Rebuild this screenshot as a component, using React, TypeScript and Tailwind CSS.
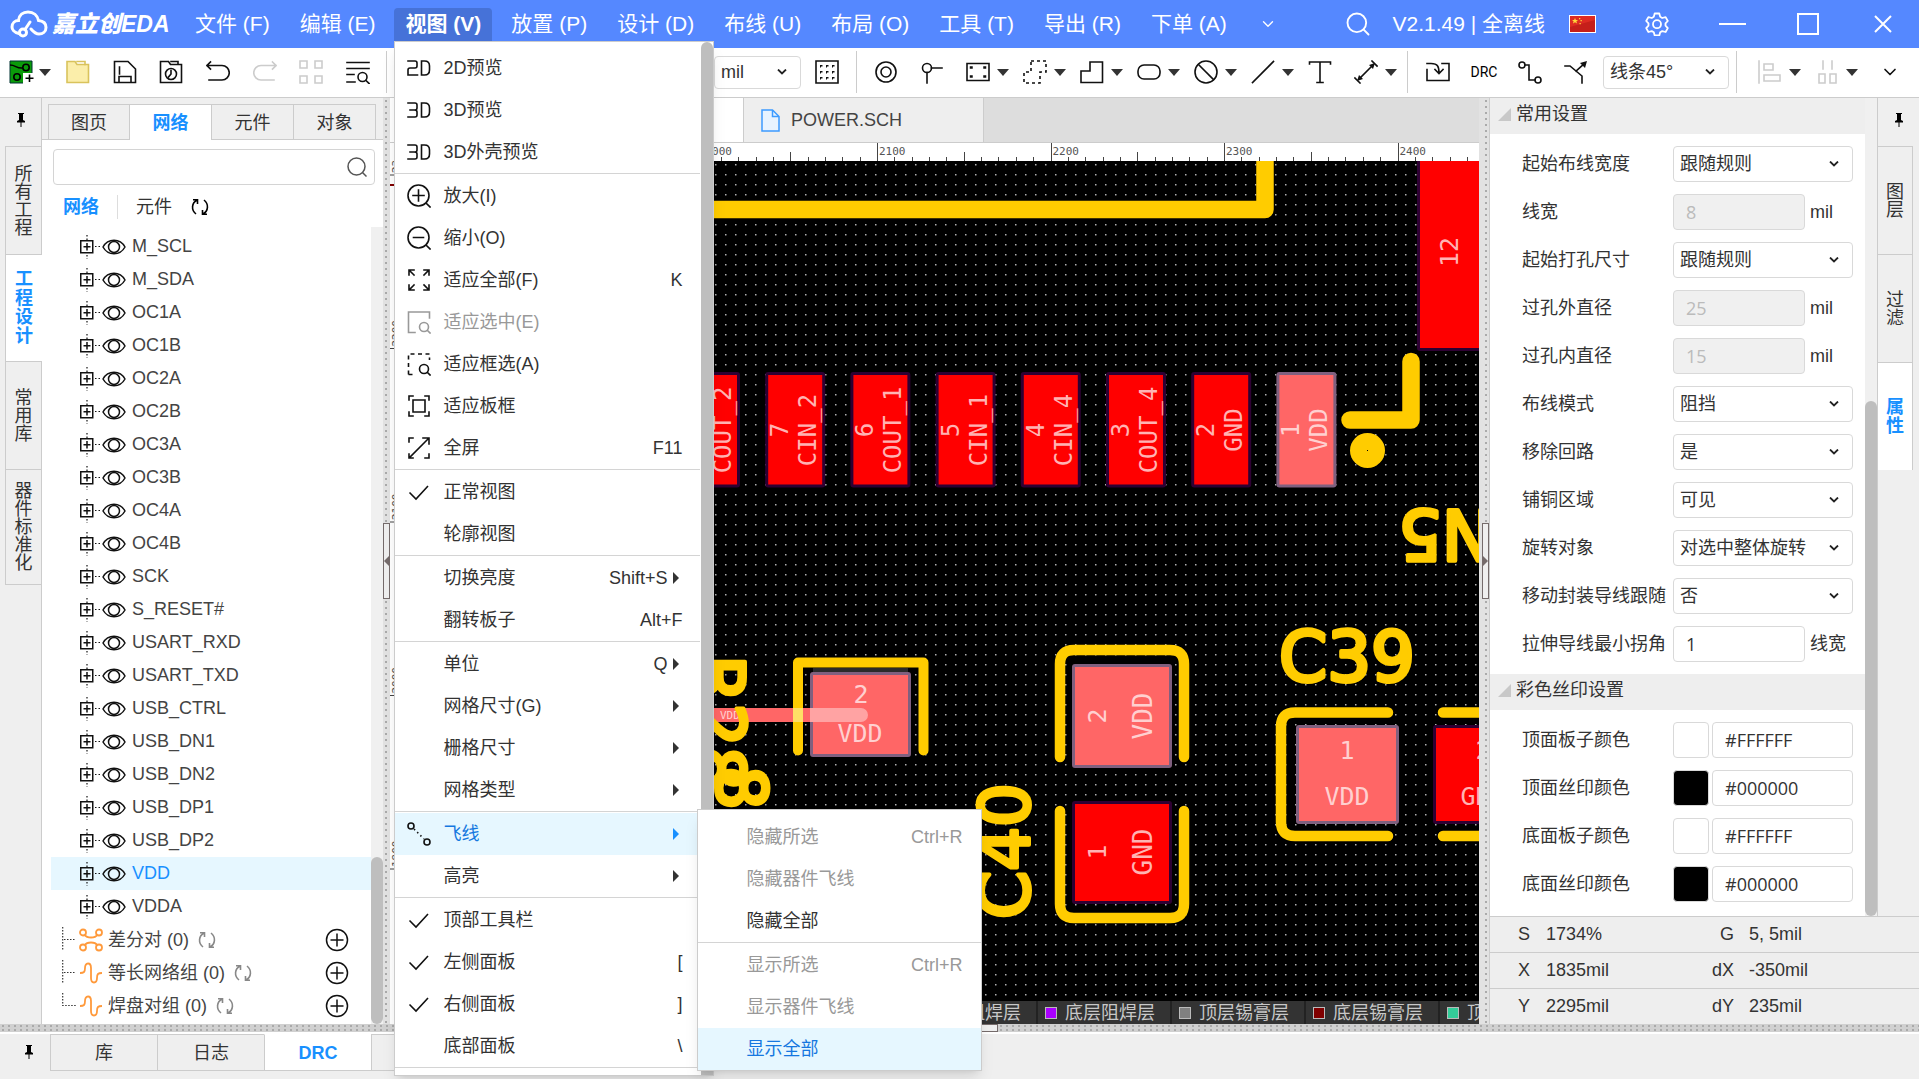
import React from "react";
import { Search, ChevronDown } from "lucide-react";

type Kids = { children?: React.ReactNode };

/* ---------- shared bits ---------- */

function Ico({ children, className = "", stroke = "#111" }: Kids & { className?: string; stroke?: string }) {
  return (
    <svg
      viewBox="0 0 24 24"
      className={"h-6 w-6 shrink-0 " + className}
      fill="none"
      stroke={stroke}
      strokeWidth={1.6}
      strokeLinecap="square"
      aria-hidden="true"
    >
      {children}
    </svg>
  );
}

function Caret() {
  return (
    <svg viewBox="0 0 12 8" className="h-2 w-3 shrink-0" fill="#333" aria-hidden="true">
      <path d="M0 1h12L6 8z" />
    </svg>
  );
}

function Pin() {
  return (
    <svg viewBox="0 0 10 14" className="h-3.5 w-2.5" fill="#000" aria-hidden="true">
      <path d="M2 0h6v1H7v6l2 1v1.500H1V8l2-1V1H2z" />
      <path d="M4.500 9h1v5h-1z" />
    </svg>
  );
}

function Refresh({ className }: { className: string }) {
  return (
    <svg viewBox="0 0 20 20" className={"h-5 w-5 " + className} fill="none" stroke="currentColor" strokeWidth={1.600} aria-hidden="true">
      <path d="M7 3C1.500 6 1 13 6 17M13 17C18.500 14 19 7 14 3M3 2.800h4.500V7M17 17.200h-4.500V13" />
    </svg>
  );
}

/* ---------- header ---------- */

type MenuRow =
  | "-"
  | { t: string; k?: string; icon?: React.ReactNode; sub?: boolean; off?: boolean; on?: boolean };

const check = (
  <Ico>
    <path d="M2.500 12.500 9 19 21 6" strokeLinecap="butt" />
  </Ico>
);
const two = (
  <Ico>
    <path d="M1 5h7q2 0 2 2v3q0 2-2 2H3q-2 0-2 2v5h9.500M14.500 5h3q5 0 5 5v4q0 5-5 5h-3z" />
  </Ico>
);
const three = (
  <Ico>
    <path d="M1 5h7q2 0 2 2v3q0 2-2 2H3M8 12q2 0 2 2v3q0 2-2 2H1M14.500 5h3q5 0 5 5v4q0 5-5 5h-3z" />
  </Ico>
);

const viewRows: MenuRow[] = [
  { t: "2D预览", icon: two },
  { t: "3D预览", icon: three },
  { t: "3D外壳预览", icon: three },
  "-",
  { t: "放大(I)", icon: <Ico><circle cx="11.500" cy="11.500" r="10.500" /><path d="M11.500 6v11M6 11.500h11M19.500 19.500l3.500 3.500" /></Ico> },
  { t: "缩小(O)", icon: <Ico><circle cx="11.500" cy="11.500" r="10.500" /><path d="M6.500 11.500h10M19.500 19.500l3.500 3.500" /></Ico> },
  { t: "适应全部(F)", k: "K", icon: <Ico><path d="M2 7V2h5M2.500 2.500 7 7M17 2h5v5M21.500 2.500 17 7M2 17v5h5M2.500 21.500 7 17M22 17v5h-5M21.500 21.500 17 17" /></Ico> },
  { t: "适应选中(E)", off: true, icon: <Ico stroke="#999"><path d="M8 22.500H1.500V2h21v6" /><circle cx="17" cy="17" r="4.500" /><path d="m20.500 20.500 2.500 2.500" /></Ico> },
  { t: "适应框选(A)", icon: <Ico><path d="M1.500 22.500V2h21v6M1.500 22.500H9" strokeDasharray="4 3.500" strokeLinecap="butt" /><circle cx="17" cy="17" r="4.500" /><path d="m20.500 20.500 2.500 2.500" /></Ico> },
  { t: "适应板框", icon: <Ico><path d="M2 6V2h4M18 2h4v4M2 18v4h4M22 18v4h-4M6 6h12v12H6z" /></Ico> },
  { t: "全屏", k: "F11", icon: <Ico><path d="M2 6V2h4M2 18v4h4M22 18v4h-4M2.500 21.500l19-19M16 2h6v6" /></Ico> },
  "-",
  { t: "正常视图", icon: check },
  { t: "轮廓视图" },
  "-",
  { t: "切换亮度", k: "Shift+S", sub: true },
  { t: "翻转板子", k: "Alt+F" },
  "-",
  { t: "单位", k: "Q", sub: true },
  { t: "网格尺寸(G)", sub: true },
  { t: "栅格尺寸", sub: true },
  { t: "网格类型", sub: true },
  "-",
  { t: "飞线", sub: true, on: true, icon: <Ico><circle cx="4" cy="4" r="3" /><circle cx="20" cy="20" r="3" /><path d="m7 7 10 10" strokeDasharray="1.500 3" strokeLinecap="butt" /></Ico> },
  { t: "高亮", sub: true },
  "-",
  { t: "顶部工具栏", icon: check },
  { t: "左侧面板", k: "[", icon: check },
  { t: "右侧面板", k: "]", icon: check },
  { t: "底部面板", k: "\\" },
  "-",
];

const flyRows: MenuRow[] = [
  { t: "隐藏所选", k: "Ctrl+R", off: true },
  { t: "隐藏器件飞线", off: true },
  { t: "隐藏全部" },
  "-",
  { t: "显示所选", k: "Ctrl+R", off: true },
  { t: "显示器件飞线", off: true },
  { t: "显示全部", on: true },
];

function ViewMenu() {
  return (
    <div className="absolute left-0 top-full z-20 flex w-80 border border-[#ccc] bg-white text-lg font-normal leading-6 text-[#333] shadow-lg">
      <ul className="min-w-0 flex-1 pb-1.5 pt-[5px]">
        {viewRows.map((r, i) =>
          r === "-" ? (
            <li key={i} className="mb-px mr-px h-px bg-[#d4d4d4]" />
          ) : (
            <li key={i} className="relative">
              <button
                disabled={r.off}
                className={
                  "flex h-[42px] w-full items-center pl-3 pr-[19px] text-left " +
                  (r.on ? "bg-[#e6f7ff] text-[#1677e0]" : r.off ? "text-[#999]" : "")
                }
              >
                <span className="w-9">{r.icon}</span>
                <span className="flex-1">{r.t}</span>
                <span className={r.sub ? "mr-1.5" : ""}>{r.k}</span>
                {r.sub && (
                  <svg viewBox="0 0 6 12" className="mr-[3px] h-3 w-1.5" fill={r.on ? "#1890ff" : "#333"} aria-hidden="true">
                    <path d="M0 0v12l6-6z" />
                  </svg>
                )}
              </button>
              {r.on && <FlyMenu />}
            </li>
          )
        )}
      </ul>
      <div className="w-3 rounded-t-full bg-[#bebebe]" />
    </div>
  );
}

function FlyMenu() {
  return (
    <ul className="absolute -top-1 left-[302px] z-30 w-[285px] border border-[#ccc] bg-white pt-1.5 shadow-lg">
      {flyRows.map((r, i) =>
        r === "-" ? (
          <li key={i} className="mb-px h-px bg-[#d4d4d4]" />
        ) : (
          <li key={i}>
            <button
              disabled={r.off}
              className={
                "flex h-[42px] w-full items-center justify-between pl-12 pr-[19px] text-left " +
                (r.on ? "bg-[#e6f7ff] text-[#1677e0]" : r.off ? "text-[#999]" : "text-[#333]")
              }
            >
              <span>{r.t}</span>
              <span>{r.k}</span>
            </button>
          </li>
        )
      )}
    </ul>
  );
}

const menus = ["文件 (F)", "编辑 (E)", "视图 (V)", "放置 (P)", "设计 (D)", "布线 (U)", "布局 (O)", "工具 (T)", "导出 (R)", "下单 (A)"];

function Header() {
  return (
    <header className="flex h-12 shrink-0 items-center bg-[#5588ff] text-[21px] leading-8 text-white">
      <div className="flex w-[184px] shrink-0 items-center pl-[10px]">
        <svg viewBox="0 0 38 28" className="h-7 w-[38px]" fill="none" stroke="#fff" strokeWidth={3} strokeLinecap="round" aria-hidden="true">
          <path d="M9 23.500C3.500 22.500 2 19 2 17c0-4 3-6.500 6.500-6.500C9 5 13 2 18 2c5.500 0 9.500 3.500 10.500 8.500C33 11 36 13.500 36 17.500c0 4.500-3.500 6.500-7 6.500-3 0-5-1.500-8-5" />
          <path d="m20 12-5 7.500" />
          <circle cx="13" cy="22.500" r="3.500" />
        </svg>
        <span className="ml-1 whitespace-nowrap text-[23px] font-black italic">嘉立创EDA</span>
      </div>
      <nav className="flex gap-2">
        {menus.map((m, i) => (
          <div key={m} className="relative">
            <button className={"h-[33px] whitespace-nowrap rounded-t px-[11px] " + (i === 2 ? "bg-[#4672d8] font-bold" : "")}>
              {m}
            </button>
            {i === 2 && <ViewMenu />}
          </div>
        ))}
      </nav>
      <button aria-label="更多菜单" className="ml-[21px]">
        <ChevronDown size={18} strokeWidth={1.800} />
      </button>
      <div className="ml-auto flex items-center">
        <button aria-label="搜索">
          <Search size={28} strokeWidth={1.600} />
        </button>
        <span className="ml-5 whitespace-nowrap">V2.1.49 | 全离线</span>
        <svg viewBox="0 0 27 18" className="ml-6 h-[18px] w-[27px]" aria-label="中国">
          <path d="M0 0h27v18H0z" fill="#fff" />
          <path d="M1 1h25v16H1z" fill="#dd2b22" />
          <path d="M1 12 26 5v12H1z" fill="#c51f1a" />
          <path d="m6 3 .9 2h2.200L7.400 6.300 8 8.500 6 7.200 4 8.500l.6-2.200L3 5h2.100zM10 3h1.300v1.300H10zM11.500 5h1.300v1.300h-1.300zM10.500 8h1.300v1.300h-1.300z" fill="#ffd83a" />
        </svg>
        <button aria-label="设置" className="ml-[49px]">
          <svg viewBox="0 0 24 24" className="h-6 w-6" fill="none" stroke="#fff" strokeWidth={1.800} strokeLinejoin="round" aria-hidden="true">
            <path d="M9.700 1.500h4.600l.9 3.300 2 1.200 3.400-.9 2.200 3.900-2.300 2.400v2.200l2.300 2.500-2.200 3.900-3.400-.9-2 1.100-.9 3.300H9.700l-.9-3.300-2-1.100-3.400.9-2.200-3.900 2.300-2.500v-2.200L1.200 9l2.200-3.900 3.400.9 2-1.200z" />
            <circle cx="12" cy="12.200" r="4" />
          </svg>
        </button>
        <button aria-label="最小化" className="ml-[50px] h-6 w-7">
          <svg viewBox="0 0 28 24" className="h-6 w-7" stroke="#fff" strokeWidth={2} aria-hidden="true">
            <path d="M0 12h27" />
          </svg>
        </button>
        <button aria-label="最大化" className="ml-[50px]">
          <svg viewBox="0 0 22 22" className="h-[22px] w-[22px]" fill="none" stroke="#fff" strokeWidth={2} aria-hidden="true">
            <path d="M1 1h20v20H1z" />
          </svg>
        </button>
        <button aria-label="关闭" className="ml-[55px] mr-[27px]">
          <svg viewBox="0 0 18 18" className="h-[18px] w-[18px]" stroke="#fff" strokeWidth={2} aria-hidden="true">
            <path d="m1 1 16 16M17 1 1 17" />
          </svg>
        </button>
      </div>
    </header>
  );
}

/* ---------- toolbar ---------- */

function Tool({ label, caret, children }: Kids & { label: string; caret?: boolean }) {
  return (
    <button
      aria-label={label}
      className={"flex h-9 shrink-0 items-center " + (caret ? "w-[57px] gap-[7px] pl-[11px]" : "w-[46px] justify-center")}
    >
      {children}
      {caret && <Caret />}
    </button>
  );
}

function Sep() {
  return <span className="mx-[7px] h-[42px] w-px shrink-0 bg-[#ccc]" />;
}

function Pick({ label, value, className }: { label: string; value: string; className: string }) {
  return (
    <span className={"relative shrink-0 " + className}>
      <select
        aria-label={label}
        defaultValue={value}
        className="h-full w-full appearance-none rounded-sm border border-[#d9d9d9] bg-white pl-1.5 text-lg leading-6 text-[#333]"
      >
        <option>{value}</option>
      </select>
      <svg viewBox="0 0 10 6" className="pointer-events-none absolute right-3.5 top-1/2 h-1.5 w-2.5 -translate-y-1/2" fill="none" stroke="#222" strokeWidth={1.800} aria-hidden="true">
        <path d="m1 .5 4 4 4-4" />
      </svg>
    </span>
  );
}

const gridDots = [6, 12, 18].flatMap((y) => [6, 12, 18].map((x) => [x, y]));

function Toolbar() {
  return (
    <div className="flex h-[50px] shrink-0 items-center border-b border-[#ccc] bg-white pb-px">
      <button aria-label="新建" className="flex h-9 w-[55px] shrink-0 items-center gap-1 pl-[9px]">
        <svg viewBox="0 0 26 24" className="h-6 w-[26px]" aria-hidden="true">
          <path d="M1 1h22v22H1z" fill="#0a9b0a" stroke="#033" />
          <circle cx="17" cy="7.500" r="3.200" fill="none" stroke="#000" strokeWidth="1.600" />
          <circle cx="8" cy="17" r="3.200" fill="none" stroke="#000" strokeWidth="1.600" />
          <path d="M1 5c6 0 6 3.500 12.500 3" fill="none" stroke="#000" strokeWidth="1.400" />
          <path d="M14 13h12v11H14z" fill="#fff" />
          <path d="M20.500 14.500v7.500M16.500 18.300h8" stroke="#000" strokeWidth="1.600" />
        </svg>
        <Caret />
      </button>
      <div className="grid w-[326px] shrink-0 grid-cols-7 justify-items-center">
        <Tool label="打开">
          <Ico stroke="#d9c35c"><path d="M1 1.500h8l2 3h11.500v18H1z" fill="#fbeeaa" /><path d="M11 1.500h8v3" /></Ico>
        </Tool>
        <Tool label="保存">
          <Ico><path d="M1.500 1.500H15L22.500 9v13.500h-21zM6.500 7v7M6 22v-5.500h12V22" /></Ico>
        </Tool>
        <Tool label="历史">
          <Ico><path d="M1.500 1.500h8l2 3h11v18h-21zM12 1.500h7v3" /><circle cx="12" cy="14" r="5.500" /><path d="M12 10.500V14l-2.500 3" /></Ico>
        </Tool>
        <Tool label="撤销">
          <Ico><path d="M1 5.500h15a7 7 0 0 1 0 14.500H3M4.500 2 1 5.500 4.500 9" /></Ico>
        </Tool>
        <Tool label="重做">
          <Ico stroke="#ccc"><path d="M23 5.500H8A7 7 0 0 0 8 20h13M19.500 2 23 5.500 19.500 9" /></Ico>
        </Tool>
        <Tool label="布局">
          <Ico stroke="#ccc"><path d="M1 1h7v7H1zM16 1h7v7h-7zM1 16h7v7H1zM16 16h7v7h-7z" /></Ico>
        </Tool>
        <Tool label="查找">
          <Ico><path d="M1 2.500h22M1 8.500h22M1 14.500h7M1 22h8" /><circle cx="16.500" cy="17" r="4.500" /><path d="m20 20.500 3 3" /></Ico>
        </Tool>
      </div>
      <span className="ml-[5px] h-[42px] w-px shrink-0 bg-[#ccc]" />
      <div className="w-[327px] shrink-0" />
      <Pick label="单位" value="mil" className="mr-[3px] h-[33px] w-[87px]" />
      <Tool label="网格">
        <Ico>
          <path d="M1 1h22v22H1z" />
          {gridDots.map(([x, y]) => (
            <path key={x + "," + y} d={`M${x - 1} ${y - 1}h2.500v1.500h-1.500v1h-1z`} fill="#111" stroke="none" />
          ))}
        </Ico>
      </Tool>
      <span className="mx-1.5 h-[42px] w-px shrink-0 bg-[#ccc]" />
      <Tool label="过孔"><Ico><circle cx="12" cy="12" r="10" /><circle cx="12" cy="12" r="5" /></Ico></Tool>
      <Tool label="焊盘"><Ico><circle cx="7" cy="8" r="4.500" /><path d="M11.500 8H22M7 12.500V23" /></Ico></Tool>
      <Tool label="板框" caret>
        <Ico><path d="M1 3.500h22v17H1z" /><path d="M5 7.500h.5M18.500 7.500h.5M5 16.500h.5M18.500 16.500h.5" strokeWidth={2.500} /></Ico>
      </Tool>
      <Tool label="区域" caret><Ico><path d="M8 1h15v11h-6v11H1V12h7z" strokeDasharray="3 3" strokeLinecap="butt" /></Ico></Tool>
      <Tool label="填充" caret><Ico><path d="M10 2h12.500v20.500H1V11h9z" /></Ico></Tool>
      <Tool label="挖槽" caret><Ico><rect x="1" y="5" width="22" height="14" rx="6" /></Ico></Tool>
      <Tool label="禁止区域" caret><Ico><circle cx="12" cy="12" r="11" /><path d="m4.500 4.500 15 15" /></Ico></Tool>
      <Tool label="线条" caret><Ico><path d="m1.500 22.500 21-21" /></Ico></Tool>
      <Tool label="文本"><Ico><path d="M1.500 4V2h21v2M12 2v20.500M9 22.500h6" /></Ico></Tool>
      <Tool label="尺寸" caret>
        <Ico><path d="M5 19 19 5M1 18l5 5M18 1l5 5" /><path d="m3 21 2-6 4 4zM21 3l-2 6-4-4z" fill="#111" stroke="none" /></Ico>
      </Tool>
      <Sep />
      <Tool label="导入"><Ico><path d="M1 3.500h4C12 3.500 13 7 13 13M9 9.500l4 4 4-4M16 3.500h7v17H1v-11" /></Ico></Tool>
      <button className="h-9 w-[46px] shrink-0 font-['Roboto',sans-serif] text-sm leading-6 text-black">DRC</button>
      <Tool label="布线"><Ico><circle cx="4" cy="5" r="3" /><circle cx="20" cy="20" r="3" /><path d="M7 5h4v15h6" /></Ico></Tool>
      <Tool label="扇出"><Ico><path d="M1 6h5l12 10v7M12 11l8-7" /><path d="m23 1-7 2 5 5z" fill="#111" stroke="none" /></Ico></Tool>
      <Pick label="线条角度" value="线条45°" className="ml-1 h-[33px] w-[126px]" />
      <Sep />
      <div className="w-[3px] shrink-0" />
      <Tool label="对齐" caret><Ico stroke="#ccc"><path d="M1 1v22M6 4h9v6H6zM6 15h16v6H6z" /></Ico></Tool>
      <Tool label="分布" caret><Ico stroke="#ccc"><path d="M8 1v8M17 1v8M4 14h6v9H4zM15 14h6v9h-6z" /></Ico></Tool>
      <button aria-label="更多工具" className="ml-auto mr-[19px]">
        <ChevronDown size={20} strokeWidth={2} color="#111" />
      </button>
    </div>
  );
}

/* ---------- left side ---------- */

function RailTab({ text, active, className }: { text: string; active?: boolean; className: string }) {
  return (
    <button
      className={
        "flex w-full items-center justify-center border-t border-[#ccc] text-lg " +
        (active ? "bg-white font-bold leading-[19px] text-[#1890ff] " : "bg-[#efefef] leading-[18px] text-[#333] ") +
        className
      }
    >
      <span className="w-[18px] whitespace-normal break-all text-center">{text}</span>
    </button>
  );
}

function LeftRail() {
  return (
    <div className="flex w-[42px] shrink-0 flex-col border-r border-[#ccc] bg-[#efefef]">
      <div className="flex h-12 items-center justify-center pb-1">
        <Pin />
      </div>
      <div className="-mr-px ml-[5px] border-b border-l border-[#ccc]">
        <RailTab text="所有工程" className="h-[108px] border-r" />
        <RailTab text="工程设计" active className="h-[107px]" />
        <RailTab text="常用库" className="h-[108px] border-r" />
        <RailTab text="器件标准化" className="h-[115px] border-r" />
      </div>
    </div>
  );
}

const nets = ["M_SCL", "M_SDA", "OC1A", "OC1B", "OC2A", "OC2B", "OC3A", "OC3B", "OC4A", "OC4B", "SCK", "S_RESET#", "USART_RXD", "USART_TXD", "USB_CTRL", "USB_DN1", "USB_DN2", "USB_DP1", "USB_DP2", "VDD", "VDDA"];

function NetRow({ name }: { name: string }) {
  const on = name === "VDD";
  return (
    <li className={"flex h-[33px] items-center pl-[29px] " + (on ? "bg-[#e6f7ff] text-[#1890ff]" : "text-[#444]")}>
      <svg viewBox="0 0 20 33" className="h-[33px] w-5" fill="none" stroke="#111" aria-hidden="true">
        <path d="M.750 10.750h12v12h-12z" strokeWidth={1.500} />
        <path d="M3.500 16.750h7M7 13v7.500" strokeWidth={1.500} />
        <path d="M7 5v5M7 25v4M15 16.500h5" strokeDasharray="1.500 2" strokeWidth={1.200} />
      </svg>
      <svg viewBox="0 0 24 16" className="ml-0.5 h-4 w-6" fill="none" stroke="#111" strokeWidth={1.500} aria-hidden="true">
        <path d="M1 8C6-1 18-1 23 8 18 17 6 17 1 8z" />
        <circle cx="12" cy="8" r="5.500" />
      </svg>
      <span className="ml-1.5 pb-0.5">{name}</span>
    </li>
  );
}

function GroupRow({ name, pair, last }: { name: string; pair?: boolean; last?: boolean }) {
  return (
    <li className="flex h-[33px] items-center pl-[11px] pr-[22px] text-[#444]">
      <svg viewBox="0 0 14 33" className="h-[33px] w-3.5" fill="none" stroke="#333" strokeWidth={1.200} strokeDasharray="1.500 1.500" aria-hidden="true">
        <path d={last ? "M.7 4v12.500H14" : "M.7 4v24M2 16.500h12"} />
      </svg>
      <svg viewBox="0 0 24 24" className="ml-[3px] h-6 w-6" fill="none" stroke="#ff9a3c" strokeWidth={1.800} aria-hidden="true">
        {pair ? (
          <>
            <circle cx="4" cy="4.500" r="3" />
            <circle cx="20" cy="4.500" r="3" />
            <circle cx="4" cy="19.500" r="3" />
            <circle cx="20" cy="19.500" r="3" />
            <path d="M6 7c1 2 2 2.500 6 2.500S17 9 18 7M6 17c1-2 2-2.500 6-2.500s5 .5 6 2.500" />
          </>
        ) : (
          <path d="M1 12c4 0 5-1 5-5 0-3 1-4.500 3-4.500s3 1.500 3 4.500v10c0 3 1 4.500 3 4.500s3-1.500 3-4.500c0-4 1-5 5-5" />
        )}
      </svg>
      <span className="ml-[5px]">{name} (0)</span>
      <button aria-label={"刷新" + name} className="ml-2">
        <Refresh className="text-[#888]" />
      </button>
      <button aria-label={"添加" + name} className="ml-auto">
        <svg viewBox="0 0 24 24" className="h-6 w-6" fill="none" stroke="#111" strokeWidth={1.500} aria-hidden="true">
          <circle cx="12" cy="12" r="10.500" />
          <path d="M12 5.500v13M5.500 12h13" />
        </svg>
      </button>
    </li>
  );
}

function LeftPanel() {
  return (
    <section className="flex w-[341px] shrink-0 flex-col bg-white text-lg leading-6 text-[#333]">
      <div className="flex h-[42px] bg-[#efefef] pl-1.5 pt-1.5 shadow-[inset_0_-1px_0_#ccc]">
        {["图页", "网络", "元件", "对象"].map((t, i) => (
          <button
            key={t}
            className={
              "w-[82px] border-t border-[#ccc] pt-px " +
              (i === 1 ? "bg-white font-bold text-[#1890ff]" : "border-b border-r ") +
              (i === 0 ? " border-l" : "") +
              (i === 1 ? " border-r" : "")
            }
          >
            {t}
          </button>
        ))}
      </div>
      <div className="relative mx-[11px] mr-2 mt-[9px]">
        <input aria-label="搜索网络" className="h-9 w-full rounded-sm border border-[#d4d4d4] bg-white px-2" />
        <svg viewBox="0 0 20 20" className="absolute right-2 top-2 h-5 w-5" fill="none" stroke="#555" strokeWidth={1.500} aria-hidden="true">
          <circle cx="9.500" cy="9.500" r="8.500" />
          <path d="m15.500 15.500 4 4" />
        </svg>
      </div>
      <div className="flex h-[42px] items-center pl-[21px] pt-0.5">
        <button className="font-bold text-[#1890ff]">网络</button>
        <span className="mx-[18px] h-6 w-px bg-[#ddd]" />
        <button>元件</button>
        <button aria-label="刷新" className="ml-[18px] text-black">
          <Refresh className="" />
        </button>
      </div>
      <div className="flex min-h-0 flex-1">
        <ul className="min-w-0 flex-1 overflow-hidden pl-[9px] pt-[3px]">
          {nets.map((n) => (
            <NetRow key={n} name={n} />
          ))}
          <GroupRow name="差分对" pair />
          <GroupRow name="等长网络组" />
          <GroupRow name="焊盘对组" last />
        </ul>
        <div className="flex w-3 flex-col justify-end bg-[#f0f0f0]">
          <div className="h-[21%] rounded-full bg-[#bebebe]" />
        </div>
      </div>
    </section>
  );
}

function VSplit({ right }: { right?: boolean }) {
  return (
    <div className={"flex shrink-0 flex-col justify-center border-[#ccc] bg-[#e2e2e2] " + (right ? "w-[11px] border-r" : "w-[7px]")}>
      <div className={"flex-1 bg-[radial-gradient(#aaa_1px,transparent_1px)] bg-[length:6px_6px] " + (right ? "ml-1 w-1.5" : "w-1.5")} />
      <button
        aria-label={right ? "收起右侧面板" : "收起左侧面板"}
        className={"flex h-[76px] w-[7px] items-center border border-[#756b6b] bg-[#efefef] " + (right ? "ml-[3px]" : "")}
      >
        <svg viewBox="0 0 6 12" className="h-3 w-1.5" fill="#756b6b" aria-hidden="true">
          <path d={right ? "M0 0v12l6-6z" : "M6 0v12L0 6z"} />
        </svg>
      </button>
      <div className={"flex-1 bg-[radial-gradient(#aaa_1px,transparent_1px)] bg-[length:6px_6px] " + (right ? "ml-1 w-1.5" : "w-1.5")} />
    </div>
  );
}

/* ---------- canvas ---------- */

const mono = "'DejaVu Sans Mono', monospace";

function HRuler() {
  const ticks = Array.from({ length: 64 }, (_, i) => i);
  const origin = 313.500;
  return (
    <svg className="h-[18px] w-full shrink-0 bg-white" aria-hidden="true">
      {ticks.map((i) => {
        const x = Math.round(origin + i * 17.350) + 0.500;
        const top = i % 10 === 0 ? 0 : i % 5 === 0 ? 9 : 14;
        return <path key={i} d={`M${x} ${top}V18`} stroke="#444" />;
      })}
      {[2000, 2100, 2200, 2300, 2400].map((n, i) => (
        <text key={n} x={origin + i * 173.500 + 2} y={12} fontSize={11} fontFamily={mono} fill="#555">
          {n}
        </text>
      ))}
    </svg>
  );
}

function VRuler() {
  return (
    <svg className="w-6 shrink-0 self-stretch bg-white" aria-hidden="true">
      <path d="M0 24h24" stroke="#800000" strokeWidth={2} />
      {[2300, 2200, 2100, 2000, 1900].map((n, i) => (
        <g key={n} transform={`translate(0 ${14 + i * 173.500})`}>
          <path d="M0 0h24" stroke="#444" />
          <text transform="translate(10 -2) rotate(-90)" fontSize={11} fontFamily={mono} fill="#555">
            {n}
          </text>
        </g>
      ))}
    </svg>
  );
}

function Pad({ x, y, w, h, hot }: { x: number; y: number; w: number; h: number; hot?: boolean }) {
  return (
    <rect
      x={x + 1.500}
      y={y + 1.500}
      width={w - 3}
      height={h - 3}
      rx={1.500}
      fill={hot ? "#ff6666" : "#ff0000"}
      stroke={hot ? "#80607f" : "#2e0033"}
      strokeWidth={3}
    />
  );
}

function Up({ x, y, size = 24, hot, children }: Kids & { x: number; y: number; size?: number; hot?: boolean }) {
  return (
    <text transform={`translate(${x} ${y}) rotate(-90)`} textAnchor="middle" fontSize={size} fontFamily={mono} fill={hot ? "#ffd0d0" : "#ffb3b3"}>
      {children}
    </text>
  );
}

function Flat({ x, y, hot, children }: Kids & { x: number; y: number; hot?: boolean }) {
  return (
    <text x={x} y={y} textAnchor="middle" fontSize={25} fontFamily={mono} fill={hot ? "#ffd0d0" : "#ffb3b3"}>
      {children}
    </text>
  );
}

function Silk({ x, y, turn = 0, anchor = "middle", children }: Kids & { x: number; y: number; turn?: number; anchor?: "middle" | "start" | "end" }) {
  return (
    <text
      transform={`translate(${x} ${y}) rotate(${turn})`}
      textAnchor={anchor}
      fontSize={69}
      fontFamily="'DejaVu Sans', sans-serif"
      fill="#ffcc00"
      stroke="#ffcc00"
      strokeWidth={4}
      strokeLinejoin="round"
    >
      {children}
    </text>
  );
}

const topPads = [
  ["8", "COUT_2"],
  ["7", "CIN_2"],
  ["6", "COUT_1"],
  ["5", "CIN_1"],
  ["4", "CIN_4"],
  ["3", "COUT_4"],
  ["2", "GND"],
  ["1", "VDD"],
];

function Board() {
  return (
    <svg className="absolute inset-0 h-full w-full bg-black" role="img" aria-label="PCB 画布">
      <defs>
        <pattern id="dots" width="10" height="10" patternUnits="userSpaceOnUse" x="1" y="3">
          <rect x="0" y="0" width="1.500" height="1.500" fill="#b0b0b0" />
        </pattern>
      </defs>
      <rect width="100%" height="100%" fill="url(#dots)" />
      <g transform="translate(-414 -161)">
        <g fill="none" stroke="#ffcc00" strokeLinecap="round" strokeLinejoin="round">
          <path d="M600 209.500H1265V150" strokeWidth={17.500} />
          <path d="M1411 361.500V420H1350" strokeWidth={17.500} />
        </g>
        <circle cx="1367.500" cy="450.500" r="17.500" fill="#ffcc00" />
        <path d="M1367 450h1v1h-1z" />

        <Pad x={1417} y={120} w={120} h={231} />
        <Up x={1458} y={252} size={25}>12</Up>

        {topPads.map(([n, net], i) => {
          const x = 680 + i * 85.200;
          const hot = n === "1";
          return (
            <g key={n}>
              <Pad x={x} y={372} w={60} h={115.500} hot={hot} />
              <Up x={x + 23} y={430} hot={hot}>{n}</Up>
              <Up x={x + 51} y={430} hot={hot}>{net}</Up>
            </g>
          );
        })}

        <Silk x={1398} y={510} turn={180} anchor="end">N5</Silk>

        <path d="M813 668h95v10h-95z" fill="#2a2a2a" />
        <Pad x={810} y={672} w={101} h={85} hot />
        <path d="M700 715H861" stroke="#ff6666" strokeWidth={14} strokeLinecap="round" />
        <path d="M810 708h51a7 7 0 0 1 0 14h-51z" fill="#ffa3a3" />
        <text x={720} y={719} fontSize={11} fontFamily={mono} fill="#ffd0d0">VDD</text>
        <Flat x={861} y={703} hot>2</Flat>
        <Flat x={860} y={742} hot>VDD</Flat>
        <path d="M798 750.500V662.500H923.500V750.500" fill="none" stroke="#ffcc00" strokeWidth={10} strokeLinecap="round" strokeLinejoin="round" />
        <path d="M793 708h10v14h-10z" fill="#ffe066" />
        <Silk x={695} y={655} turn={90} anchor="start">R28</Silk>
        <Silk x={717} y={788} turn={90}>8</Silk>

        <g fill="none" stroke="#ffcc00" strokeWidth={10.500} strokeLinecap="round">
          <path d="M1060 757V664Q1060 650 1074 650H1170Q1184 650 1184 664V757" />
          <path d="M1060 811V904Q1060 918 1074 918H1170Q1184 918 1184 904V811" />
          <path d="M1388 712.500H1295Q1281 712.500 1281 726.500V822Q1281 836 1295 836H1388M1443 712.500H1600M1443 836H1600" />
        </g>
        <Pad x={1072} y={664} w={100} h={104} hot />
        <Up x={1106} y={716} size={25} hot>2</Up>
        <Up x={1152} y={716} size={26} hot>VDD</Up>
        <Pad x={1072} y={801} w={100} h={103} />
        <Up x={1106} y={852} size={25}>1</Up>
        <Up x={1152} y={852} size={26}>GND</Up>
        <Silk x={1029} y={851} turn={-90}>C40</Silk>

        <Silk x={1347} y={681}>C39</Silk>
        <Pad x={1296} y={725} w={103} h={99} hot />
        <Flat x={1347} y={759} hot>1</Flat>
        <Flat x={1347} y={805} hot>VDD</Flat>
        <Pad x={1433} y={725} w={103} h={99} />
        <Flat x={1483} y={759}>2</Flat>
        <Flat x={1483} y={805}>GND</Flat>
      </g>
    </svg>
  );
}

function Layer({ color, name }: { color: string; name: string }) {
  return (
    <button className="flex w-[134px] shrink-0 items-center gap-2 border-l-2 border-[#222] pl-[7px] pt-px text-lg leading-[22px] text-[#c8c8c8]">
      <span className="h-3 w-3 border border-[#bbb]" style={{ backgroundColor: color }} />
      <span className="whitespace-nowrap">{name}</span>
    </button>
  );
}

function Center() {
  return (
    <section className="flex min-w-0 flex-1 flex-col overflow-hidden">
      <div className="flex h-[45px] shrink-0 border-b border-[#ccc] bg-[#ddd]">
        <div className="w-[354px] border-r border-[#ccc] bg-white" />
        <button className="flex w-60 items-center gap-[11px] border-r border-[#ccc] bg-[#eee] pl-[17px] text-lg leading-6 text-[#444]">
          <svg viewBox="0 0 19 23" className="h-[23px] w-[19px]" fill="none" stroke="#3d9bff" strokeWidth={1.500} aria-hidden="true">
            <path d="M1 1h10.500L18 7.500V22H1z" fill="#e8f3ff" />
            <path d="M11.500 1v6.500H18" />
          </svg>
          POWER.SCH
        </button>
      </div>
      <HRuler />
      <div className="flex min-h-0 flex-1">
        <VRuler />
        <div className="flex min-w-0 flex-1 flex-col">
          <div className="relative min-h-0 flex-1">
            <Board />
          </div>
          <div className="flex h-[23px] shrink-0 overflow-hidden bg-[#333] pl-[488px]">
            <Layer color="#800080" name="顶层阻焊层" />
            <Layer color="#aa00ff" name="底层阻焊层" />
            <Layer color="#808080" name="顶层锡膏层" />
            <Layer color="#800000" name="底层锡膏层" />
            <Layer color="#33cc99" name="顶层" />
          </div>
        </div>
      </div>
    </section>
  );
}

/* ---------- right side ---------- */

function Section({ title, children }: Kids & { title: string }) {
  return (
    <div>
      <h2 className="flex h-9 items-center gap-[5px] bg-[#eee] pb-1 pl-2 text-lg leading-6">
        <svg viewBox="0 0 13 13" className="h-[13px] w-[13px]" fill="#c8c8c8" aria-hidden="true">
          <path d="M13 0v13H0z" />
        </svg>
        {title}
      </h2>
      <div className="py-1.5">{children}</div>
    </div>
  );
}

function Field({ label, children }: Kids & { label: string }) {
  return (
    <label className="flex h-12 items-center pl-8 pr-3">
      <span className="w-[151px] shrink-0 whitespace-nowrap">{label}</span>
      {children}
    </label>
  );
}

const ui = "font-['Open_Sans','Noto_Sans_CJK_SC',sans-serif]";

function Sel({ label, value }: { label: string; value: string }) {
  return (
    <Field label={label}>
      <Pick label={label} value={value} className="h-9 w-[180px]" />
    </Field>
  );
}

function Num({ label, value, unit, off }: { label: string; value: string; unit: string; off?: boolean }) {
  return (
    <Field label={label}>
      <input
        defaultValue={value}
        disabled={off}
        className={
          "h-9 w-[132px] rounded-sm border border-[#d9d9d9] pl-3 " + ui + (off ? " bg-[#f0f0f0] text-[#bbb]" : " bg-white")
        }
      />
      <span className="ml-[5px]">{unit}</span>
    </Field>
  );
}

function Swatch({ label, value }: { label: string; value: string }) {
  return (
    <Field label={label}>
      <span className="h-9 w-9 rounded-sm border border-[#d9d9d9]" style={{ backgroundColor: value }} />
      <input aria-label={label} defaultValue={value} className={"ml-[3px] h-9 w-[141px] rounded-sm border border-[#d9d9d9] bg-white pl-3 " + ui} />
    </Field>
  );
}

const stats = [
  ["S", "1734%", "G", "5, 5mil"],
  ["X", "1835mil", "dX", "-350mil"],
  ["Y", "2295mil", "dY", "235mil"],
];

function Right() {
  return (
    <aside className="flex w-[429px] shrink-0 flex-col text-lg leading-6 text-[#333]">
      <div className="flex min-h-0 flex-1">
        <div className="flex-1 overflow-hidden bg-white">
          <Section title="常用设置">
            <Sel label="起始布线宽度" value="跟随规则" />
            <Num label="线宽" value="8" unit="mil" off />
            <Sel label="起始打孔尺寸" value="跟随规则" />
            <Num label="过孔外直径" value="25" unit="mil" off />
            <Num label="过孔内直径" value="15" unit="mil" off />
            <Sel label="布线模式" value="阻挡" />
            <Sel label="移除回路" value="是" />
            <Sel label="铺铜区域" value="可见" />
            <Sel label="旋转对象" value="对选中整体旋转" />
            <Sel label="移动封装导线跟随" value="否" />
            <Num label="拉伸导线最小拐角" value="1" unit="线宽" />
          </Section>
          <Section title="彩色丝印设置">
            <Swatch label="顶面板子颜色" value="#FFFFFF" />
            <Swatch label="顶面丝印颜色" value="#000000" />
            <Swatch label="底面板子颜色" value="#FFFFFF" />
            <Swatch label="底面丝印颜色" value="#000000" />
          </Section>
        </div>
        <div className="flex w-3 flex-col justify-end bg-[#f0f0f0]">
          <div className="h-[63%] rounded-full bg-[#bebebe]" />
        </div>
        <div className="w-[42px] border-l border-[#ccc] bg-[#efefef]">
          <div className="flex h-12 items-center justify-center pb-1">
            <Pin />
          </div>
          <div className="mr-1.5 border-r border-[#ccc]">
            <RailTab text="图层" className="h-[108px]" />
            <RailTab text="过滤" className="h-[108px]" />
            <RailTab text="属性" active className="h-[108px]" />
          </div>
        </div>
      </div>
      <dl className="bg-[#eee]">
        {stats.map(([a, b, c, d]) => (
          <div key={a} className="flex h-9 items-center border-t border-[#ccc] pb-0.5">
            <dt className="w-10 text-right">{a}</dt>
            <dd className="ml-4 w-[150px]">{b}</dd>
            <dt className="w-[38px] text-right">{c}</dt>
            <dd className="ml-[15px]">{d}</dd>
          </div>
        ))}
      </dl>
    </aside>
  );
}

/* ---------- bottom ---------- */

function Bottom() {
  return (
    <footer className="shrink-0">
      <div className="flex h-2 bg-[#d0d0d0]">
        <div className="w-[921px] bg-[radial-gradient(#aaa_1px,transparent_1px)] bg-[length:6px_4px]" />
        <button aria-label="收起底部面板" className="h-2 w-[77px] border border-[#756b6b] bg-[#efefef]" />
        <div className="flex-1 bg-[radial-gradient(#aaa_1px,transparent_1px)] bg-[length:6px_4px]" />
      </div>
      <div className="flex h-[47px] border-t-2 border-white bg-[#efefef] text-lg leading-6 text-[#333]">
        <div className="flex h-9 w-[50px] items-center justify-center pl-2">
          <Pin />
        </div>
        {["库", "日志", "DRC"].map((t) => (
          <button
            key={t}
            className={"h-[37px] w-[107px] border border-r-0 border-[#ccc] " + (t === "DRC" ? "border-t-transparent bg-white font-bold text-[#1890ff]" : "")}
          >
            {t}
          </button>
        ))}
        <div className="h-[37px] w-[100px] border border-r-0 border-[#ccc]" />
      </div>
    </footer>
  );
}

export default function App() {
  return (
    <div className="flex h-screen flex-col overflow-hidden bg-[#efefef] font-['Liberation_Sans','Noto_Sans_CJK_SC',sans-serif]">
      <Header />
      <Toolbar />
      <main className="flex min-h-0 flex-1">
        <LeftRail />
        <LeftPanel />
        <VSplit />
        <Center />
        <VSplit right />
        <Right />
      </main>
      <Bottom />
    </div>
  );
}
